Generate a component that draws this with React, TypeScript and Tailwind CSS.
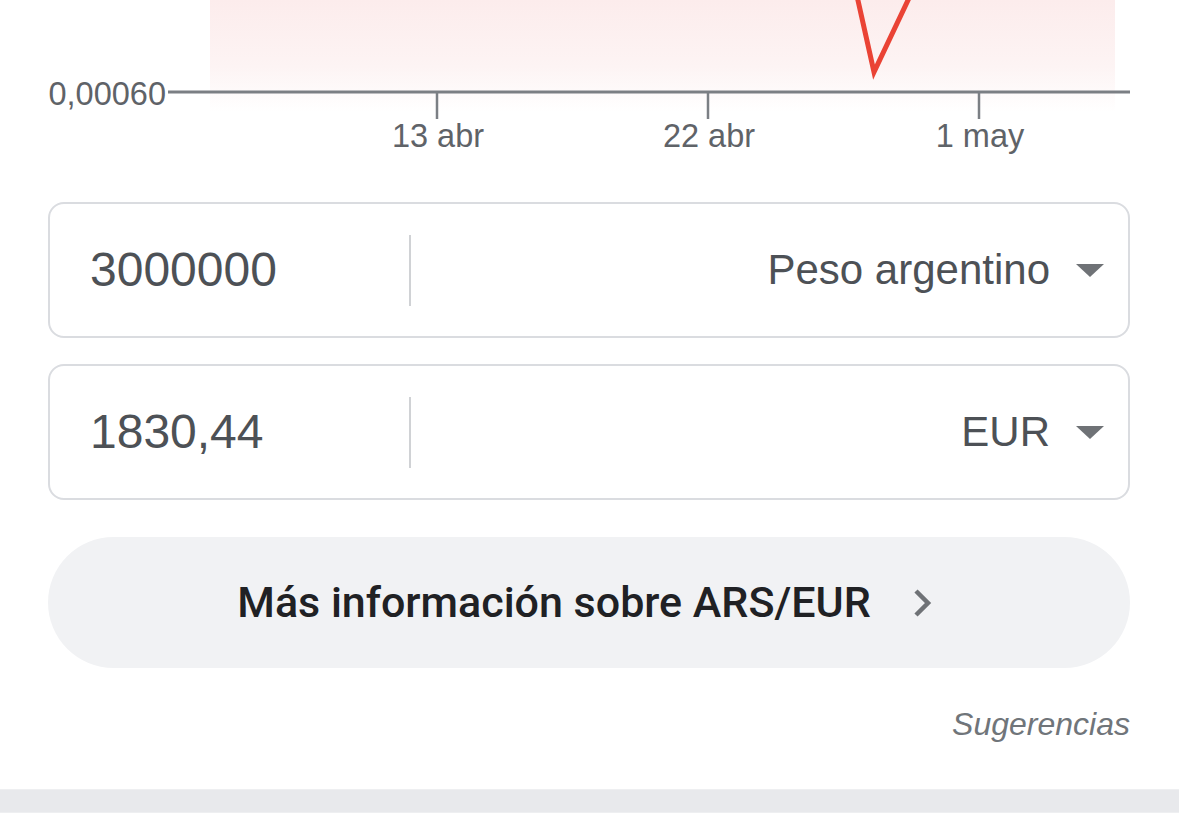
const ticks = [
  { x: 437, label: "13 abr" },
  { x: 708, label: "22 abr" },
  { x: 979, label: "1 may" },
];

const Chart = () => {
  return (
    <svg width="1179" height="202" viewBox="0 0 1179 202" className="block">
      <defs>
        <linearGradient id="fade" x1="0" y1="0" x2="0" y2="1">
          <stop offset="0" stopColor="#fcecec" />
          <stop offset="0.6" stopColor="#fdf4f4" />
          <stop offset="1" stopColor="#ffffff" />
        </linearGradient>
      </defs>
      <rect x="210" y="0" width="905" height="112" fill="url(#fade)" />
      <polyline points="857,-4 874,72 910,-4" fill="none" stroke="#ea4335" strokeWidth="5" strokeLinejoin="miter" />
      <line x1="168" y1="92" x2="1130" y2="92" stroke="#7b7f84" strokeWidth="3" />
      {ticks.map((t) => (
        <line key={t.x} x1={t.x} y1="92" x2={t.x} y2="119" stroke="#7b7f84" strokeWidth="2.5" />
      ))}
      <text x="166" y="105" textAnchor="end" fontFamily="'Liberation Sans', Arial, sans-serif" fontSize="32.5" fill="#5f6368">
        0,00060
      </text>
      {ticks.map((t) => (
        <text key={t.label} x={t.x + 1} y="147" textAnchor="middle" fontFamily="'Liberation Sans', Arial, sans-serif" fontSize="32.5" fill="#5f6368">
          {t.label}
        </text>
      ))}
    </svg>
  );
};

const Caret = () => (
  <svg width="28" height="13" viewBox="0 0 28 13" className="shrink-0">
    <path d="M0 0 H28 L14 13 Z" fill="#6f7276" />
  </svg>
);

const ConverterRow = ({ amount, currency }: { amount: string; currency: string }) => {
  return (
    <div className="flex items-center h-[136px] rounded-[16px] border-2 border-[#dadce0] bg-white">
      <div className="w-[359px] pl-[40px] text-[48px] text-[#4d5156] leading-none">{amount}</div>
      <div className="w-[2px] h-[71px] bg-[#d0d2d5]" />
      <div className="flex-1 flex items-center justify-end gap-[26px] pr-[24px]">
        <span className="text-[42px] text-[#4d5156] leading-none">{currency}</span>
        <Caret />
      </div>
    </div>
  );
};

export default function App() {
  return (
    <div className="w-[1179px] h-[823px] bg-white overflow-hidden font-['Liberation_Sans',Arial,sans-serif]">
      <Chart />
      <div className="px-[48px] pr-[49px] flex flex-col">
        <ConverterRow amount="3000000" currency="Peso argentino" />
        <div className="mt-[26px]">
          <ConverterRow amount="1830,44" currency="EUR" />
        </div>
        <button className="mt-[37px] h-[131px] rounded-full bg-[#f1f2f4] flex items-center justify-center gap-[42px] pr-[8px]">
          <span className="font-['Roboto',Arial,sans-serif] font-medium text-[43px] text-[#202124] leading-none">
            Más información sobre ARS/EUR
          </span>
          <svg width="20" height="30" viewBox="0 0 20 30" className="shrink-0">
            <path d="M3 3 L15 15 L3 27" fill="none" stroke="#6f7276" strokeWidth="4.5" />
          </svg>
        </button>
        <div className="mt-[40px] text-right italic text-[32px] text-[#70757a] leading-none">Sugerencias</div>
      </div>
      <div className="mt-[49px] h-[24px] bg-[#e8e9ec] border-y border-[#eeeff1]" />
    </div>
  );
}
